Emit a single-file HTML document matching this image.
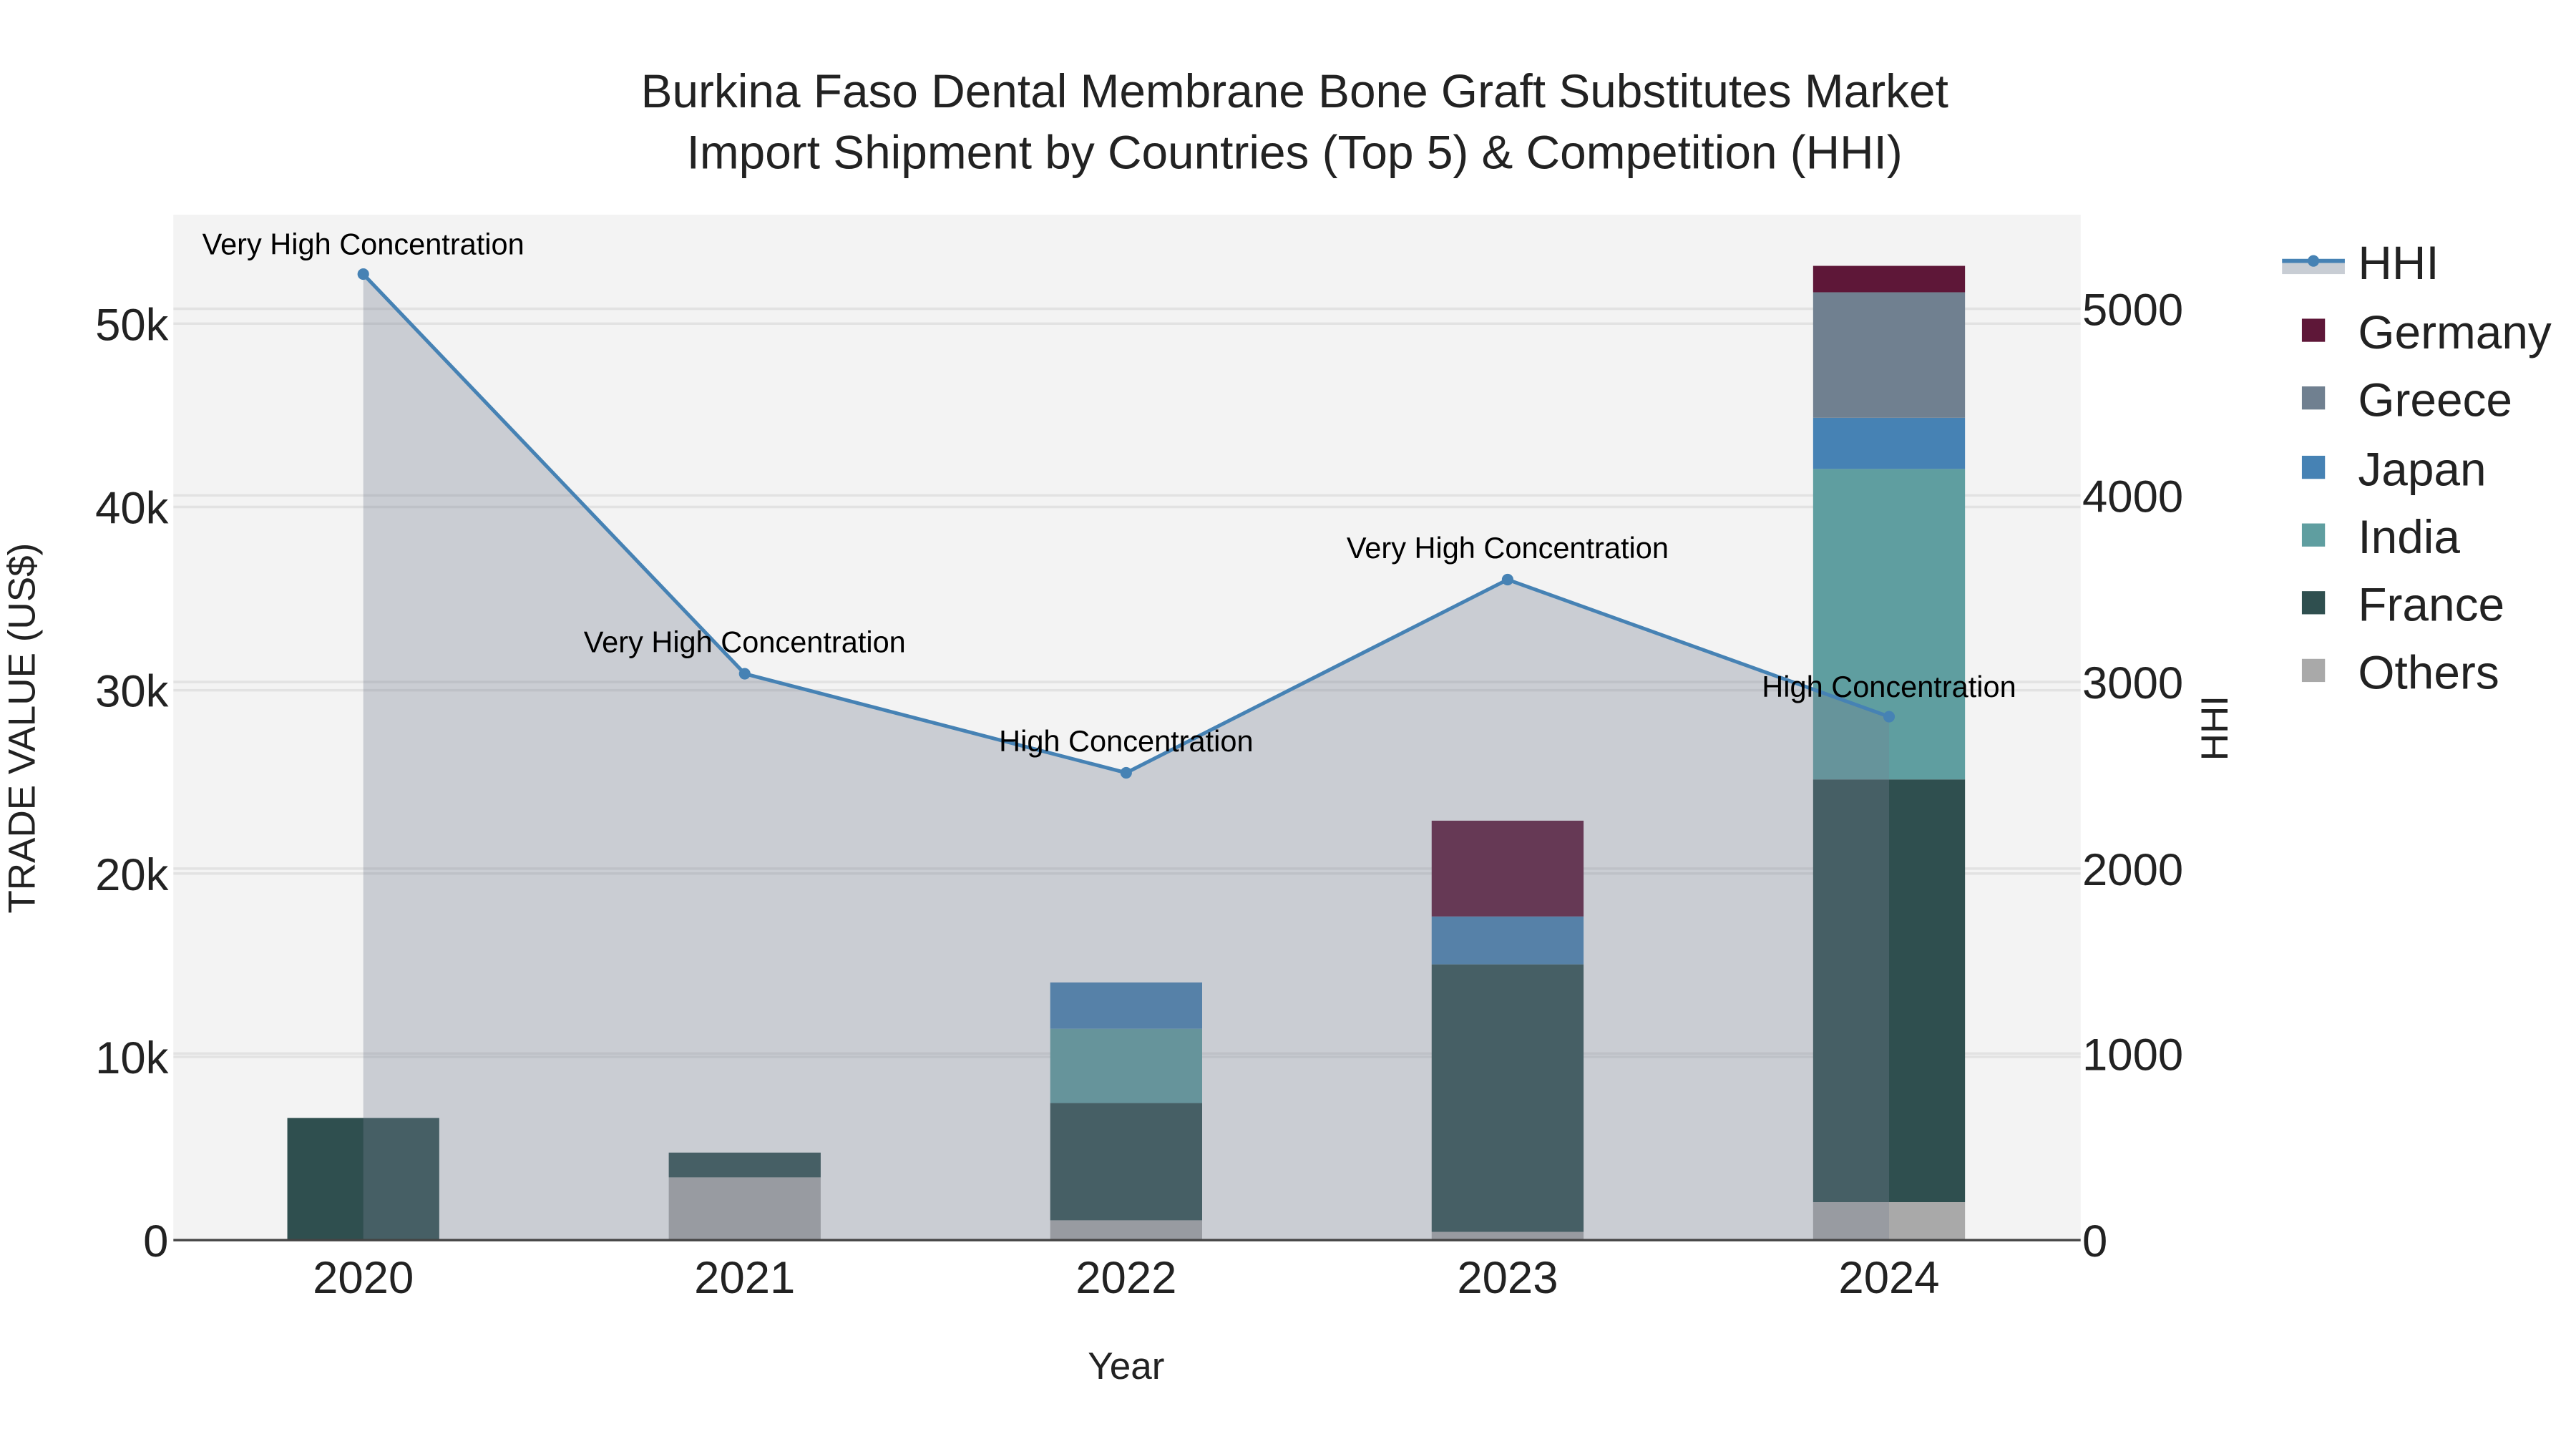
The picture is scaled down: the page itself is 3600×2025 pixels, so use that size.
<!DOCTYPE html>
<html><head><meta charset="utf-8"><style>html,body{margin:0;padding:0;background:#fff}svg{display:block}</style></head>
<body>
<svg width="3600" height="2025" viewBox="0 0 1560 877.5" xmlns="http://www.w3.org/2000/svg" font-family="Liberation Sans, sans-serif">
<rect x="0" y="0" width="1560" height="877.5" fill="#fff"/>
<rect x="105" y="130" width="1155" height="621" fill="#f3f3f3"/>
<g stroke="#e2e2e2" stroke-width="1.5">
<line x1="105" x2="1260" y1="640" y2="640"/><line x1="105" x2="1260" y1="529" y2="529"/><line x1="105" x2="1260" y1="418" y2="418"/><line x1="105" x2="1260" y1="307" y2="307"/><line x1="105" x2="1260" y1="196" y2="196"/>
<line x1="105" x2="1260" y1="638" y2="638"/><line x1="105" x2="1260" y1="526" y2="526"/><line x1="105" x2="1260" y1="413" y2="413"/><line x1="105" x2="1260" y1="300" y2="300"/><line x1="105" x2="1260" y1="187" y2="187"/>
</g>
<rect x="174" y="677" width="92" height="74" fill="#2f4f4f"/>
<rect x="405" y="713" width="92" height="38" fill="#a9a9a9"/><rect x="405" y="698" width="92" height="15" fill="#2f4f4f"/>
<rect x="636" y="739" width="92" height="12" fill="#a9a9a9"/><rect x="636" y="668" width="92" height="71" fill="#2f4f4f"/><rect x="636" y="623" width="92" height="45" fill="#5f9ea0"/><rect x="636" y="595" width="92" height="28" fill="#4682b4"/>
<rect x="867" y="746" width="92" height="5" fill="#a9a9a9"/><rect x="867" y="584" width="92" height="162" fill="#2f4f4f"/><rect x="867" y="555" width="92" height="29" fill="#4682b4"/><rect x="867" y="497" width="92" height="58" fill="#5e1738"/>
<rect x="1098" y="728" width="92" height="23" fill="#a9a9a9"/><rect x="1098" y="472" width="92" height="256" fill="#2f4f4f"/><rect x="1098" y="284" width="92" height="188" fill="#5f9ea0"/><rect x="1098" y="253" width="92" height="31" fill="#4682b4"/><rect x="1098" y="177" width="92" height="76" fill="#708090"/><rect x="1098" y="161" width="92" height="16" fill="#5e1738"/>
<polygon points="220,751 220,166 451,408 682,468 913,351 1144,434 1144,751" fill="rgb(117,128,147)" fill-opacity="0.33"/>
<line x1="105" x2="1260" y1="751" y2="751" stroke="#444" stroke-width="1.5"/>
<polyline points="220,166 451,408 682,468 913,351 1144,434" fill="none" stroke="#4682b4" stroke-width="2.2"/>
<g fill="#4682b4"><circle cx="220" cy="166" r="3.5"/><circle cx="451" cy="408" r="3.5"/><circle cx="682" cy="468" r="3.5"/><circle cx="913" cy="351" r="3.5"/><circle cx="1144" cy="434" r="3.5"/></g>
<g font-size="18" text-anchor="middle" fill="#000">
<text x="220" y="154">Very High Concentration</text>
<text x="451" y="395">Very High Concentration</text>
<text x="682" y="455">High Concentration</text>
<text x="913" y="338">Very High Concentration</text>
<text x="1144" y="422">High Concentration</text>
</g>
<g font-size="28.5" text-anchor="middle" fill="#222">
<text x="784" y="65">Burkina Faso Dental Membrane Bone Graft Substitutes Market</text>
<text x="784" y="102">Import Shipment by Countries (Top 5) &amp; Competition (HHI)</text>
</g>
<g font-size="27.5" text-anchor="end" fill="#222">
<text x="102" y="761">0</text><text x="102" y="650">10k</text><text x="102" y="539">20k</text><text x="102" y="428">30k</text><text x="102" y="317">40k</text><text x="102" y="206">50k</text>
</g>
<g font-size="27.5" text-anchor="start" fill="#222">
<text x="1261" y="761">0</text><text x="1261" y="648">1000</text><text x="1261" y="536">2000</text><text x="1261" y="423">3000</text><text x="1261" y="310">4000</text><text x="1261" y="197">5000</text>
</g>
<g font-size="27.5" text-anchor="middle" fill="#222">
<text x="220" y="783">2020</text><text x="451" y="783">2021</text><text x="682" y="783">2022</text><text x="913" y="783">2023</text><text x="1144" y="783">2024</text>
</g>
<text x="682" y="835" font-size="23" text-anchor="middle" fill="#222">Year</text>
<text transform="translate(21,441) rotate(-90)" font-size="23" text-anchor="middle" fill="#222">TRADE VALUE (US$)</text>
<text transform="translate(1349,441) rotate(-90)" font-size="23" text-anchor="middle" fill="#222">HHI</text>
<rect x="1382" y="159" width="38" height="7" fill="#c8cdd4"/>
<line x1="1382" x2="1420" y1="158" y2="158" stroke="#4682b4" stroke-width="2.5"/>
<circle cx="1401" cy="158" r="3.5" fill="#4682b4"/>
<g font-size="28.5" fill="#222">
<text x="1428" y="169">HHI</text>
<text x="1428" y="211">Germany</text>
<text x="1428" y="252">Greece</text>
<text x="1428" y="294">Japan</text>
<text x="1428" y="335">India</text>
<text x="1428" y="376">France</text>
<text x="1428" y="417">Others</text>
</g>
<rect x="1394" y="193" width="14" height="14" fill="#5e1738"/>
<rect x="1394" y="234" width="14" height="14" fill="#708090"/>
<rect x="1394" y="276" width="14" height="14" fill="#4682b4"/>
<rect x="1394" y="317" width="14" height="14" fill="#5f9ea0"/>
<rect x="1394" y="358" width="14" height="14" fill="#2f4f4f"/>
<rect x="1394" y="399" width="14" height="14" fill="#a9a9a9"/>
</svg>
</body></html>
